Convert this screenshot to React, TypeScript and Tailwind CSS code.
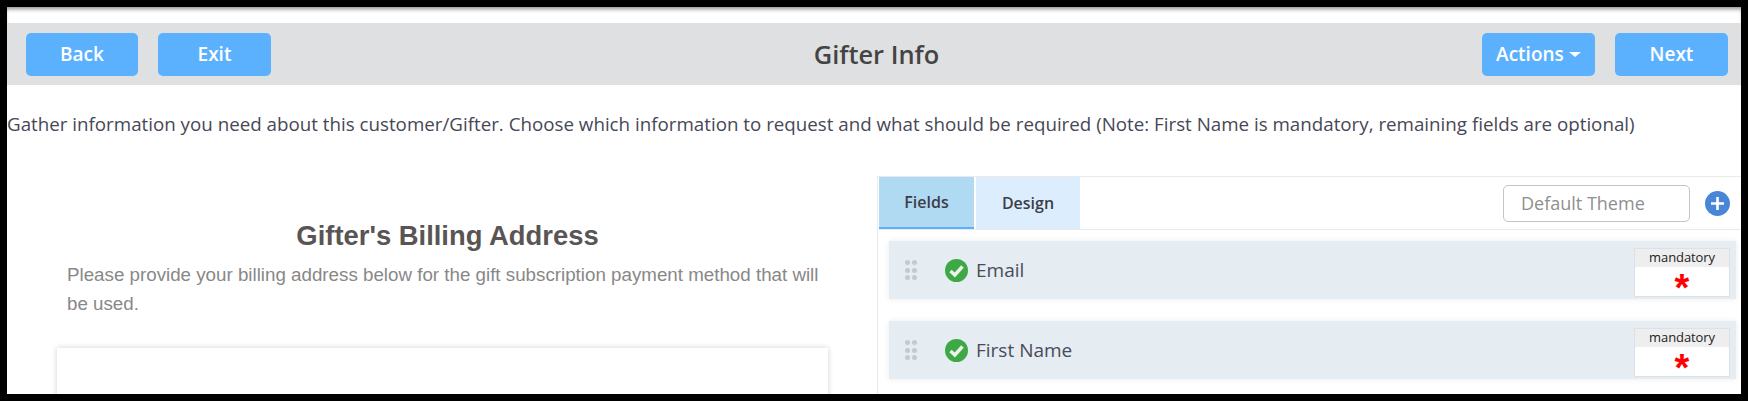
const sans = "font-['Open_Sans',sans-serif]";

function ActionButton({ label, caret, wide = true }: { label: string; caret?: boolean; wide?: boolean }) {
  return (
    <button
      className={`flex h-[43px] items-center justify-center gap-[5px] rounded-[5px] bg-[#5cb1ff] text-[19px] font-semibold text-white ${wide ? "w-[113px]" : "w-[112px]"}`}
    >
      {label}
      {caret && <span className="mt-[1px] h-0 w-0 border-x-[6px] border-t-[5px] border-x-transparent border-t-white" />}
    </button>
  );
}

function DragDots() {
  return (
    <div className="grid w-[12px] grid-cols-2 gap-x-[2px] gap-y-[2.5px]">
      {[0, 1, 2, 3, 4, 5].map((i) => (
        <span key={i} className="h-[5px] w-[5px] rounded-full bg-[#c6c9cd]" />
      ))}
    </div>
  );
}

function CheckBadge() {
  return (
    <svg width={23} height={23} viewBox="0 0 23 23" aria-hidden>
      <circle cx={11.5} cy={11.5} r={11.5} fill="#3fa846" />
      <path d="M5.5 12 L9.8 16 L17.5 7.5" fill="none" stroke="#e9f5ea" strokeWidth={3.4} />
    </svg>
  );
}

function FieldRow({ label }: { label: string }) {
  return (
    <div className="flex h-[58px] items-center bg-[#e5ecf2] pl-[16px] pr-[6px] shadow-[0_0_6px_rgba(0,0,0,0.08)]">
      <DragDots />
      <div className="ml-[28px]">
        <CheckBadge />
      </div>
      <span className="ml-[8px] text-[19px] text-[#4a4a5a]">{label}</span>
      <div className="mb-[2px] ml-auto h-[49px] w-[96px] self-end border border-[#dde1e5] bg-white">
        <div className="flex h-[18px] items-center justify-center bg-[#eeeeee] text-[13px] tracking-[-0.1px] text-[#222]">mandatory</div>
        <div className="pt-[2px] text-center font-['Liberation_Sans',sans-serif] text-[38px] font-bold leading-[38px] text-[#ff0000]">*</div>
      </div>
    </div>
  );
}

export default function App() {
  return (
    <div className={`${sans} h-[401px] w-[1748px] overflow-hidden border-[7px] border-black bg-white text-[#444]`}>
      <div className="h-[16px] shadow-[inset_0_4px_4px_-2px_rgba(0,0,0,0.45)]" />
      <header className="flex h-[62px] items-center justify-between bg-[#dfe0e1] pl-[19px] pr-[13px]">
        <div className="flex w-[245px] gap-[20px]">
          <ActionButton label="Back" wide={false} />
          <ActionButton label="Exit" />
        </div>
        <h1 className="text-[25.4px] font-semibold text-[#444]">Gifter Info</h1>
        <div className="flex w-[246px] gap-[20px]">
          <ActionButton label="Actions" caret />
          <ActionButton label="Next" />
        </div>
      </header>
      <p className="mt-[25px] h-[28px] whitespace-nowrap text-[18.75px] leading-[28px] text-[#474756]">
        Gather information you need about this customer/Gifter. Choose which information to request and what should be required (Note: First Name is mandatory, remaining fields are optional)
      </p>
      <div className="mt-[38px] flex">
        <section className="w-[870px] pl-[50px] pr-[49px] font-['Liberation_Sans',sans-serif]">
          <h2 className="mt-[44px] pl-[10px] text-center text-[27.4px] font-bold leading-[32px] text-[#5a5555]">Gifter's Billing Address</h2>
          <p className="ml-[10px] mt-[8px] w-[760px] text-[18.75px] leading-[29px] text-[#888888]">
            Please provide your billing address below for the gift subscription payment method that will be used.
          </p>
          <div className="mt-[30px] h-[60px] bg-white shadow-[0_0_6px_rgba(0,0,0,0.18)]" />
        </section>
        <section className="h-[300px] flex-1 border-l border-t border-[#eaeaea] pl-[1px]">
          <div className="flex h-[53px] items-center border-b border-[#eaeaea]">
            <div className="flex h-[52px] w-[95px] items-center justify-center border-b-2 border-[#5cb1ff] bg-[#b0d9f2] text-[16px] font-semibold text-[#3d3d48]">Fields</div>
            <div className="ml-[2px] flex h-[52px] w-[104px] items-center justify-center bg-[#dceefd] text-[16px] font-semibold text-[#3d3d48]">Design</div>
            <div className="ml-[423px] flex h-[37px] w-[187px] items-center rounded-[5px] border border-[#c4c4c4] px-[17px] text-[18px] text-[#8f8f8f]">Default Theme</div>
            <div className="ml-[15px] flex h-[25px] w-[25px] items-center justify-center rounded-full bg-[#4a86d8]">
              <svg width={15} height={15} viewBox="0 0 15 15" aria-hidden>
                <path d="M7.5 1 V14 M1 7.5 H14" stroke="#fff" strokeWidth={2.6} />
              </svg>
            </div>
          </div>
          <div className="ml-[10px] mr-[5px] mt-[11px] flex flex-col gap-[22px]">
            <FieldRow label="Email" />
            <FieldRow label="First Name" />
          </div>
        </section>
      </div>
    </div>
  );
}
